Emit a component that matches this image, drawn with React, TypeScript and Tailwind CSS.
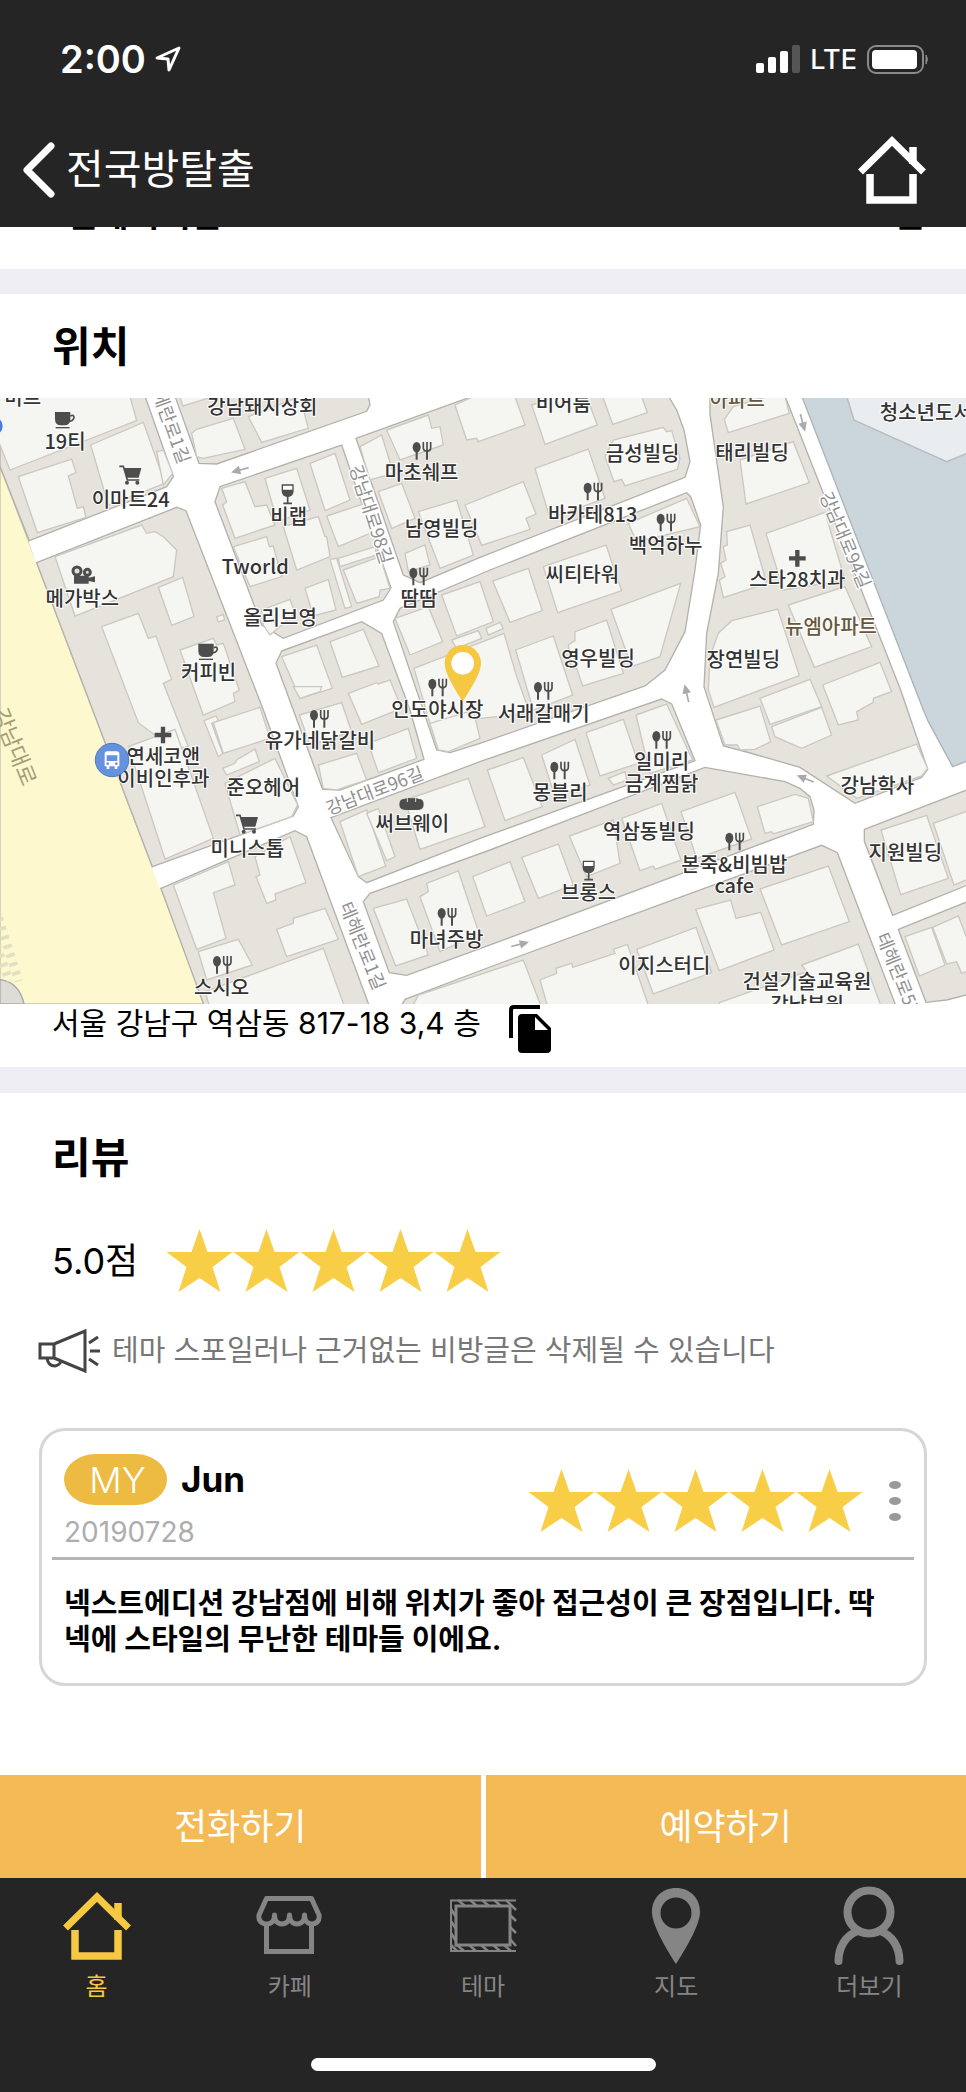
import React from "react";

const STAR = "M33 0 L41 23 H66 L46 38 L54 63 L33 49 L12 63 L20 38 L0 23 H25 Z";

function Stars({ count, className }: any) {
    return (
        <div className={className} role="img" aria-label={count + " / 5"}>
            {Array.from({ length: count }).map((_, i) => (
                <svg key={i} viewBox="0 0 66 64" className="h-16 w-[67px]" fill="#f7ce46">
                    <path d={STAR} />
                </svg>
            ))}
        </div>
    );
}

function HomeIcon({ className }: any) {
    return (
        <svg viewBox="0 0 68 68" className={className} fill="none" stroke="currentColor">
            <path d="M2.5 36 L34 5 L65.5 36" strokeWidth="7" />
            <path d="M12 38 V64 H55 V38" strokeWidth="7.5" />
            <path d="M55 11 V28" strokeWidth="7.5" />
        </svg>
    );
}

function CafeIcon() {
    return (
        <svg viewBox="0 0 68 68" className="size-[68px]" fill="none" stroke="currentColor" strokeWidth="5">
            <path d="M10.500 30 V59.500 H55.500 V30" />
            <path
                d="M10.500 6.500 H55.500 L63 23 C64 29 60 32 56 32 C52 32 48.500 29 48.500 23 C48.500 29 45 32 41 32 C37 32 33.500 29 33.500 23 C33.500 29 30 32 26 32 C22 32 18.500 29 18.500 23 C18.500 29 15 32 11 32 C6 32 2 29 3 23 Z"
                strokeLinejoin="round"
            />
        </svg>
    );
}

function ThemeIcon() {
    return (
        <svg viewBox="0 0 68 68" className="size-[68px]" fill="none" stroke="currentColor">
            <path d="M67 8.500 H2 V59 H67" strokeWidth="2" />
            <rect x="7" y="14" width="54" height="39" strokeWidth="3" />
            <path
                d="M9 8l7 6M21 8l7 6M33 8l7 6M45 8l7 6M57 8l10 10M8 53l7 6M20 53l7 6M32 53l7 6M44 53l7 6M55 53l7 6M2 17l5 8M2 29l5 8M2 41l5 8M2 53l6 6M61 23l6 6M61 35l6 6M61 47l6 7"
                strokeWidth="2.5"
            />
        </svg>
    );
}

function PinIcon() {
    return (
        <svg viewBox="0 0 68 78" className="h-[78px] w-[68px]" fill="currentColor">
            <path
                fillRule="evenodd"
                d="M34 1 C20 1 10 11 10 25 C10 36 20 55 34 77 C48 55 58 36 58 25 C58 11 48 1 34 1 Z M34 10.500 a15.500 15.500 0 1 1 0 31 a15.500 15.500 0 1 1 0 -31 Z"
            />
        </svg>
    );
}

function PersonIcon() {
    return (
        <svg viewBox="0 0 70 80" className="h-20 w-[70px]" fill="none" stroke="currentColor" strokeWidth="8">
            <circle cx="35" cy="26" r="21.500" />
            <path d="M4.500 75 C4.500 61 12 49 24 45 M65.500 75 C65.500 61 58 49 46 45" strokeLinecap="round" />
        </svg>
    );
}

// land blocks between the streets
const blocks = [
    "0,-6 435,-6 520,236 500,266 88,428 0,205",
    "110,494 530,328 558,338 790,936 895,1226 880,1254 457,1406",
    "483,1471 885,1298 920,1316 1110,1830 615,1830",
    "525,-6 597,196 650,198 1100,40 1110,20 1105,-6",
    "660,266 1025,141 1173,570 1150,606 850,721 785,681 645,311",
    "1068,121 1420,-6 2005,-6 2030,36 2052,96 2070,191 2055,238 1440,478 1260,554 1210,531",
    "845,759 1085,671 1145,706 1230,936 1272,1084 1020,1176 968,1174 828,796",
    "1200,631 1470,516 2060,284 2072,296 2102,381 2085,516 2055,701 1995,816 1935,864 1440,1036 1350,1064 1310,1056 1180,671",
    "993,1259 1440,1091 1985,903 2015,918 2085,1088 1440,1321 1100,1454 1075,1436",
    "1110,1486 1470,1356 2115,1108 2355,1151 2400,1171 2430,1196 2442,1236 2440,1279 1440,1652 1220,1732 1168,1724 1090,1511",
    "1200,1830 1215,1804 1470,1707 2465,1342 2512,1364 2690,1830",
    "2130,-6 2130,50 2170,326 2155,526 2120,706 2112,866 2170,1044 2240,1062 2400,1108 2565,1216 2765,1138 2783,1114 2702,876 2355,-6",
    "2593,1294 2910,1172 2910,1458 2678,1552 2593,1330",
    "2695,1594 2910,1508 2910,1788 2840,1806 2778,1813",
];

const northWest = [
    "-10,20 390,20 410,92 30,240 -10,140",
    "272,165 430,97 495,280 325,345",
    "470,185 490,180 518,250 490,285",
    "55,260 215,207 228,248 205,258 232,355 250,350 258,382 112,428",
    "575,130 590,118 700,85 735,178 610,205 590,200",
    "540,20 640,20 548,48",
    "745,80 900,20 925,115 785,157",
    "165,500 425,405 440,430 465,425 490,440 530,480 520,560 225,678",
    "475,592 548,562 582,680 515,706",
    "305,710 415,670 445,745 468,738 515,868 490,880 565,1070 520,1076 415,998",
    "650,680 670,674 674,690 655,696",
    "540,780 640,745 650,765 670,760 718,900 700,910 705,935 610,975",
    "668,345 680,335 665,295 735,275 765,350 800,345 825,405 705,445",
    "700,470 800,440 808,470 820,468 845,560 750,590",
    "795,265 890,235 930,360 832,395",
    "930,220 1005,190 1050,330 975,362",
    "980,378 1095,340 1110,430 1015,470",
    "850,410 955,380 975,440 980,440 990,500 890,540",
    "990,508 1010,505 1055,650 1035,655",
    "1015,505 1125,470 1130,495 1020,530",
    "1030,540 1140,500 1170,595 1140,600 1138,620 1070,640",
    "915,595 985,568 1008,660 940,678",
    "785,660 870,628 885,670 810,735 790,705",
    "1080,170 1145,135 1180,250 1110,270",
    "1160,120 1285,75 1295,115 1320,110 1330,165 1200,210",
    "1135,305 1205,280 1245,385 1175,415",
    "1255,365 1370,330 1420,495 1320,535",
    "1215,490 1275,465 1290,525 1225,545",
    "1185,685 1285,650 1328,755 1230,795",
    "845,800 950,765 997,895 900,925",
    "990,755 1090,718 1137,828 1027,862",
    "1242,835 1512,730 1550,860 1590,970 1290,1000",
];

const northEast = [
    "-75,45 -20,20 105,20 135,105 -5,155 -10,145 -40,150",
    "155,45 230,20 320,20 352,105 195,163",
    "368,20 485,20 502,68 398,103",
    "375,200 400,150 550,112 560,125 575,122 600,205 592,238 435,288 425,268 402,275",
    "165,235 325,177 375,325 210,385",
    "-45,345 130,275 168,372 138,385 150,418 5,466",
    "445,400 620,325 660,410 470,455",
    "190,530 378,465 425,602 233,668",
    "38,573 145,535 187,662 90,697",
    "-115,615 0,575 40,695 -70,738",
    "18,715 60,697 70,715 25,735",
    "-85,750 -5,722 5,745 -70,775",
    "393,658 602,580 540,800 455,830",
    "265,765 285,752 285,725 380,690 430,850 308,888 290,835 275,835",
    "107,780 220,738 278,915 160,960",
    "733,88 760,50 860,20 915,20 928,70 745,128",
    "780,210 940,155 988,278 798,342",
    "740,425 810,405 860,580 730,623 718,570 735,560 722,520 738,510 730,470 742,465",
    "858,430 1035,367 1095,570 910,600",
    "925,645 1095,590 1175,770 1003,832",
    "755,692 893,657 958,857 702,952 685,900 690,800 715,730",
    "1028,885 1200,817 1235,905 1180,925 1180,937 1130,965 1135,990 1075,1005",
    "840,925 990,868 1025,950 870,1003",
    "875,1010 1025,952 1055,1035 965,1075 885,1040",
    "708,990 840,948 872,1055 825,1078 780,1080 772,1065 735,1065",
];

const southWest = [
    "385,170 525,118 640,445 495,507",
    "612,92 648,78 655,92 635,100 668,190 655,200",
    "640,98 780,52 810,145 670,190",
    "668,235 705,220 710,210 765,177 778,215 680,255",
    "675,280 825,205 893,345 875,380 720,435",
    "520,585 685,515 705,585 640,608 678,745 590,778",
    "765,500 870,440 918,578 825,612 828,630 800,640 768,560 780,555",
    "830,718 880,700 880,685 975,655 1015,748 860,800",
    "595,785 715,748 757,825 620,870",
    "615,905 970,775 1035,954 630,954",
    "898,75 1025,38 1055,125 930,165",
    "955,225 1070,190 1100,270 1010,300 970,295",
    "1105,160 1225,115 1250,205 1135,248",
    "1045,10 1130,-22 1135,-18 1170,-30 1205,55 1085,103",
    "880,-10 965,-10 960,5 900,25",
    "1290,100 1420,60 1440,145 1345,185 1315,180",
    "1020,395 1100,360 1157,528 1075,560",
    "1100,370 1135,355 1185,500 1160,512",
    "1215,330 1405,265 1455,410 1260,478",
    "1120,655 1220,627 1285,795 1187,828",
    "1260,620 1285,605 1280,580 1375,543 1437,730 1320,785",
    "1235,954 1255,915 1570,810 1625,954",
];

const southEast = [
    "22,240 130,203 187,350 75,392",
    "185,195 285,148 330,285 225,320",
    "318,128 430,88 475,220 360,258",
    "468,75 560,42 638,210 510,250",
    "385,265 435,245 440,270 400,285",
    "268,438 400,390 420,520 320,560",
    "425,385 545,340 603,510 525,538 520,528 480,542",
    "603,365 765,307 815,447 650,505",
    "832,350 945,313 985,325 1000,395 880,432 875,425 855,430",
    "125,502 235,462 280,585 175,625",
    "-22,560 90,515 135,635 20,678",
    "180,870 230,850 228,835 275,820 278,832 405,790 400,778 442,763 508,954 204,954",
    "470,778 648,712 695,848 520,912",
    "647,658 752,630 768,685 842,667 882,780 718,842",
    "840,597 1045,528 1108,695 905,765",
    "965,825 1135,762 1205,954 720,954 718,938 980,845",
    "1040,258 1310,162 1343,235 1325,258 1130,325",
    "1203,420 1340,376 1405,565 1262,614",
    "1360,400 1470,360 1470,565 1422,585",
    "1275,740 1355,712 1395,825 1318,858",
    "1358,712 1435,678 1470,770 1470,840 1445,850 1430,815 1400,822",
];

// name, centre x, baseline y
const places: any[] = [
    ["미트", 68, 20], ["19티", 195, 153], ["이마트24", 392, 326], ["강남돼지상회", 787, 48], ["비랩", 866, 379],
    ["마초쉐프", 1265, 246], ["남영빌딩", 1325, 414], ["Tworld", 766, 528], ["메가박스", 247, 624],
    ["올리브영", 840, 682], ["땀땀", 1257, 624], ["커피빈", 626, 846], ["비어룸", 1690, 38],
    ["금성빌딩", 1928, 188], ["바카테813", 1778, 371], ["백억하누", 1997, 464], ["씨티타워", 1747, 552],
    ["영우빌딩", 1794, 804], ["태리빌딩", 2256, 186], ["스타28치과", 2392, 568], ["장연빌딩", 2230, 808],
    ["청소년도서관", 2805, 66], ["인도야시장", 1312, 958], ["유가네닭갈비", 960, 1051], ["연세코앤", 490, 1098],
    ["이비인후과", 490, 1164], ["준오헤어", 790, 1192], ["미니스톱", 742, 1374], ["써브웨이", 1237, 1298],
    ["스시오", 665, 1790], ["마녀주방", 1340, 1648], ["서래갈매기", 1631, 968], ["일미리", 1985, 1114],
    ["금계찜닭", 1985, 1180], ["몽블리", 1680, 1206], ["역삼동빌딩", 1947, 1324], ["브롱스", 1766, 1506],
    ["본죽&비빔밥", 2203, 1421], ["cafe", 2203, 1484], ["강남학사", 2632, 1186], ["지원빌딩", 2716, 1386],
    ["이지스터디", 1993, 1726], ["건설기술교육원", 2421, 1772], ["강남분원", 2421, 1842],
];

const apartments: any[] = [["아파트", 2212, 26], ["뉴엠아파트", 2493, 708]];

// name, centre x, centre y, angle
const streets: any[] = [
    ["테헤란로1길", 510, 62, 70], ["강남대로98길", 1118, 348, 72], ["강남대로96길", 1122, 1174, -21],
    ["강남대로94길", 2540, 424, 67], ["테헤란로1길", 1092, 1642, 68], ["테헤란로57길", 2708, 1748, 68],
];

const forks = [
    [1265, 159], [1255, 536], [1312, 869], [1778, 281], [1997, 374], [1629, 879], [957, 963],
    [1340, 1557], [666, 1701], [1984, 1026], [1678, 1118], [2203, 1331],
];

const arrows = [[720, 216, 165], [2408, 74, 75], [2060, 886, -103], [1560, 1639, -14], [2416, 1142, 202]];

function Buildings({ list, x, y }: any) {
    return (
        <g transform={"translate(" + x + " " + y + ")"} fill="#f5f5f2" stroke="#cbc8c0" strokeWidth="4">
            {list.map((points: string) => <polygon key={points} points={points} />)}
        </g>
    );
}

function StreetMap() {
    return (
        <svg viewBox="0 0 2898 1818" className="block w-full font-['Noto_Sans_CJK_KR',sans-serif]" role="img" aria-label="지도">
            <rect width="2898" height="1818" fill="#fff" />
            <path d="M0 205 L90 440 L110 494 L457 1406 L483 1471 L615 1818 H72 C62 1775 40 1750 0 1745 Z" fill="#fdf8cd" stroke="#c4c1ac" strokeWidth="4" />
            <path d="M90 430 L111 494 M459 1408 L482 1469" stroke="#fff" strokeWidth="8" />
            <path d="M0 1745 C40 1750 62 1775 72 1818 H0 Z" fill="#dedcd6" stroke="#aaa" strokeWidth="4" />
            <g stroke="#e3dfc3" strokeWidth="26" strokeDasharray="11 17">
                <path d="M-4 1560 L56 1750" />
                <path d="M-28 1590 L28 1750" />
            </g>
            <g fill="#e6e3dc" stroke="#b3b1ac" strokeWidth="4">
                {blocks.map((points) => <polygon key={points} points={points} />)}
            </g>
            <path d="M2405 -6 L2770 936 L2785 971 L2858 1106 L2910 1086 V-6 Z" fill="#cbd5dc" stroke="#aeb3b6" strokeWidth="4" />
            <path d="M2540 -6 L2562 66 L2840 191 L2910 162 V-6 Z" fill="#e9edf0" stroke="#b5bbbf" strokeWidth="4" />
            <Buildings list={northWest} x={0} y={-24} />
            <Buildings list={northEast} x={1440} y={-24} />
            <Buildings list={southWest} x={0} y={876} />
            <Buildings list={southEast} x={1440} y={876} />

            {arrows.map(([x, y, angle]) => (
                <g key={x} transform={"translate(" + x + " " + y + ") rotate(" + angle + ")"}>
                    <path d="M-27 0 H5" stroke="#aaa" strokeWidth="5" />
                    <path d="M0 -13 L28 0 L0 13 Z" fill="#aaa" />
                </g>
            ))}

            <g fontSize="54" fill="#8f8f8f" stroke="#fff" strokeWidth="8" paintOrder="stroke" textAnchor="middle" dominantBaseline="central">
                {streets.map(([name, x, y, angle]) => (
                    <text key={name + x} transform={"translate(" + x + " " + y + ") rotate(" + angle + ")"}>{name}</text>
                ))}
            </g>
            <text transform="translate(50 1044) rotate(68)" fontSize="66" fill="#a39c75" textAnchor="middle" dominantBaseline="central">강남대로</text>

            <g fill="#4d4d4d" stroke="#4d4d4d">
                {forks.map(([x, y]) => (
                    <g key={x + "-" + y} transform={"translate(" + x + " " + y + ")"}>
                        <ellipse cx="-15" cy="-11" rx="12" ry="16" stroke="none" />
                        <path d="M-15 0 V26 M16 0 V26" strokeWidth="6" />
                        <path d="M5 -27 V-10 Q5 0 16 0 Q27 0 27 -10 V-27 M16 -27 V0" strokeWidth="5" fill="none" />
                    </g>
                ))}
                {[[195, 68], [625, 763]].map(([x, y]) => (
                    <g key={x} transform={"translate(" + x + " " + y + ")"}>
                        <path d="M-30 -26 H16 V-4 Q16 14 -2 14 H-12 Q-30 14 -30 -4 Z" stroke="none" />
                        <path d="M16 -14 Q27 -19 27 -9 Q24 1 12 2" strokeWidth="5" fill="none" />
                        <path d="M-28 21 H14" strokeWidth="4" />
                    </g>
                ))}
                {[[392, 231], [742, 1278]].map(([x, y]) => (
                    <g key={x} transform={"translate(" + x + " " + y + ")"}>
                        <path d="M-20 -21 H32 L24 8 H-12 Z" stroke="none" />
                        <path d="M-34 -26 H-22 L-10 15 H26" strokeWidth="5" fill="none" />
                        <circle cx="-11" cy="23" r="6" stroke="none" />
                        <circle cx="20" cy="23" r="6" stroke="none" />
                    </g>
                ))}
                {[[863, 288], [1766, 1417]].map(([x, y]) => (
                    <g key={x} transform={"translate(" + x + " " + y + ")"}>
                        <path d="M-16 -27 H16 V-10 Q16 6 0 7 Q-16 6 -16 -10 Z" fill="#fff" strokeWidth="4" />
                        <path d="M-16 -13 H16 Q16 7 0 7 Q-16 7 -16 -13" stroke="none" />
                        <path d="M0 6 V27 M-13 28 H13" strokeWidth="5" />
                    </g>
                ))}
                {[[2392, 481], [489, 1011]].map(([x, y]) => (
                    <path key={x} transform={"translate(" + x + " " + y + ")"} d="M-25 0 H25 M0 -25 V25" strokeWidth="13" />
                ))}
                <g transform="translate(250 531)">
                    <circle cx="-19" cy="-12" r="12" strokeWidth="9" fill="#ddd" />
                    <circle cx="12" cy="-8" r="9" strokeWidth="9" fill="#ddd" />
                    <path d="M-28 2 H16 V8 L35 4 V22 L16 18 V26 H-28 Z" stroke="none" />
                </g>
                <path d="M1216 1236 Q1198 1236 1198 1219 Q1198 1203 1213 1203 Q1222 1198 1235 1201 Q1248 1198 1257 1203 Q1271 1203 1271 1219 Q1271 1236 1254 1236 Z" stroke="none" />
                <path d="M1222 1200 V1212 M1247 1200 V1212" stroke="#e6e3dc" strokeWidth="3" />
            </g>

            <g fontSize="60" fontWeight="500" fill="#333" stroke="#fff" strokeWidth="6" paintOrder="stroke" textAnchor="middle">
                {places.map(([name, x, y]) => <text key={name} x={x} y={y}>{name}</text>)}
                {apartments.map(([name, x, y]) => <text key={name} x={x} y={y} fill="#66573c">{name}</text>)}
            </g>

            <circle cx="-20" cy="84" r="28" fill="#4a7be0" />
            <circle cx="336" cy="1086" r="50" fill="#6592de" stroke="#4d79c6" strokeWidth="3" />
            <path fillRule="evenodd" fill="#fff" d="M322 1060 H350 Q358 1060 358 1068 V1105 H352 V1113 H344 V1105 H328 V1113 H320 V1105 H314 V1068 Q314 1060 322 1060 Z M320 1072 V1089 H352 V1072 Z M319 1097 a4 4 0 1 0 8 0 a4 4 0 1 0 -8 0 M345 1097 a4 4 0 1 0 8 0 a4 4 0 1 0 -8 0" />
            <path d="M1388 741 C1357 741 1334 765 1334 796 C1334 825 1362 870 1388 911 C1414 870 1443 825 1443 796 C1443 765 1419 741 1388 741 Z" fill="#f5c842" />
            <circle cx="1388" cy="796" r="34" fill="#fff" />
        </svg>
    );
}

const tabs = [
    { name: "홈", icon: <HomeIcon className="size-[68px]" /> },
    { name: "카페", icon: <CafeIcon /> },
    { name: "테마", icon: <ThemeIcon /> },
    { name: "지도", icon: <PinIcon /> },
    { name: "더보기", icon: <PersonIcon /> },
];

export default function App() {
    return (
        <div className="flex min-h-screen flex-col bg-white font-[Inter,'Noto_Sans_CJK_KR',sans-serif] text-black">
            <header className="bg-[#252525] text-white">
                <div className="flex h-[118px] items-center justify-between pr-9 pl-[60px]">
                    <div className="flex items-center gap-2">
                        <span className="text-[38px] leading-none font-semibold">2:00</span>
                        <svg viewBox="0 0 28 28" className="size-7" fill="none" stroke="#fff" strokeWidth="3" strokeLinejoin="round">
                            <path d="M25 3 L3 13 L14 14 L15 25 Z" />
                        </svg>
                    </div>
                    <div className="flex items-center gap-[10px]">
                        <svg viewBox="0 0 44 28" className="h-7 w-11" fill="#fff">
                            <rect x="0" y="18" width="8" height="10" rx="2" />
                            <rect x="12" y="12" width="8" height="16" rx="2" />
                            <rect x="24" y="6" width="8" height="22" rx="2" />
                            <rect x="36" y="0" width="8" height="28" rx="2" fill="#555" />
                        </svg>
                        <span className="text-[27px] leading-none font-medium">LTE</span>
                        <svg viewBox="0 0 63 29" className="h-[29px] w-[63px]">
                            <rect x="1" y="1" width="55" height="27" rx="8" fill="none" stroke="#8a8a8a" strokeWidth="2" />
                            <rect x="5" y="5" width="45" height="19" rx="4" fill="#fff" />
                            <path d="M59 10 Q62 14 59 19 Z" fill="#8a8a8a" stroke="#8a8a8a" />
                        </svg>
                    </div>
                </div>
                <div className="flex h-[109px] items-center justify-between pr-10 pb-[6px] pl-5">
                    <button className="flex items-center gap-2">
                        <svg viewBox="0 0 38 58" className="h-[58px] w-[38px]" fill="none" stroke="#fff" strokeWidth="7" strokeLinecap="round" strokeLinejoin="round">
                            <path d="M31 5 L7 29 L31 53" />
                        </svg>
                        <span className="text-[41px] leading-none">전국방탈출</span>
                    </button>
                    <button aria-label="홈으로">
                        <HomeIcon className="size-[68px]" />
                    </button>
                </div>
            </header>

            {/* last row of the section scrolled under the header */}
            <section className="h-[42px] pr-10 pl-[66px]">
                <div className="flex h-[3px] items-end justify-between overflow-hidden text-[34px] leading-[30px] font-bold">
                    <span>전체이시간</span>
                    <span>0분</span>
                </div>
            </section>

            <section className="border-t-[25px] border-[#efeef4]">
                <h2 className="px-[52px] pt-[30px] pb-[29px] text-[42px] leading-[45px] font-bold">위치</h2>
                <StreetMap />
                <div className="flex h-[63px] items-start px-[52px]">
                    <p className="text-[30px] leading-[38px]">서울 강남구 역삼동 817-18 3,4 층</p>
                    <button className="ml-7" aria-label="주소 복사">
                        <svg viewBox="0 0 44 50" className="h-[50px] w-11">
                            <path d="M2 34 V6 Q2 3 5 3 H31" fill="none" stroke="#000" strokeWidth="4" />
                            <path fillRule="evenodd" d="M13 10 H28 L42 24 V45 Q42 49 38 49 H13 Q9 49 9 45 V14 Q9 10 13 10 Z M26 13 V26 H39 Z" />
                        </svg>
                    </button>
                </div>
            </section>

            <section className="border-t-[26px] border-[#efeef4]">
                <h2 className="px-[52px] pt-[42px] pb-[49px] text-[42px] leading-[45px] font-bold">리뷰</h2>
                <div className="flex items-center gap-7 px-[52px]">
                    <span className="text-[36px] leading-none">5.0점</span>
                    <Stars count={5} className="flex" />
                </div>
                <div className="mt-9 flex items-center gap-3 pl-[38px] text-[#777]">
                    <svg viewBox="0 0 62 44" className="h-11 w-[62px] shrink-0" fill="none" stroke="#444" strokeWidth="3">
                        <path d="M2 15 H16 V29 H2 Z M16 15 L47 2 V42 L16 29 M9 29 Q10 37 17 37 Q22 36 23 32 M51 14 L60 8 M52 22 H62 M51 30 L60 36" />
                    </svg>
                    <p className="text-[29px] leading-[44px]">테마 스포일러나 근거없는 비방글은 삭제될 수 있습니다</p>
                </div>

                <article className="mx-[39px] mt-[55px] mb-[83px] rounded-[26px] border-[3px] border-[#d6d6d6] px-[10px] pt-[23px] pb-[25px]">
                    <div className="flex justify-between px-3">
                        <div>
                            <div className="flex items-center gap-[14px]">
                                <span className="flex h-[51px] w-[103px] items-center justify-center rounded-[32px/26px] bg-[#edbb41] pl-1 text-[36px] font-light text-white">MY</span>
                                <strong className="text-[35px] leading-none">Jun</strong>
                            </div>
                            <time className="mt-3 block text-[28px] leading-[30px] text-[#adadad]">20190728</time>
                        </div>
                        <div className="flex items-center gap-[26px]">
                            <Stars count={5} className="flex" />
                            <button aria-label="더보기 메뉴">
                                <svg viewBox="0 0 13 40" className="h-10 w-[13px]" fill="#9a9a9a">
                                    <ellipse cx="6" cy="4" rx="6" ry="4" />
                                    <ellipse cx="6" cy="20" rx="6" ry="4" />
                                    <ellipse cx="6" cy="36" rx="6" ry="4" />
                                </svg>
                            </button>
                        </div>
                    </div>
                    <hr className="mt-[10px] border-t-[3px] border-[#b5b5b5]" />
                    <p className="mt-[26px] px-3 text-[29px] leading-9 font-bold">
                        넥스트에디션 강남점에 비해 위치가 좋아 접근성이 큰 장점입니다. 딱 넥에 스타일의 무난한 테마들 이에요.
                    </p>
                </article>
            </section>

            <div className="mt-auto grid grid-cols-2 gap-[5px]">
                <button className="h-[103px] bg-[#f4ba55] text-[36px] text-white">전화하기</button>
                <button className="h-[103px] bg-[#f4ba55] text-[36px] text-white">예약하기</button>
            </div>

            <nav className="bg-[#252525] pb-[21px]">
                <div className="grid grid-cols-5">
                    {tabs.map((tab, i) => (
                        <a key={tab.name} href="#" className={"flex flex-col items-center pt-2 " + (i === 0 ? "text-[#f7c842]" : "text-[#858585]")}>
                            <span className="flex h-20 items-center">{tab.icon}</span>
                            <span className="mt-1 text-2xl leading-[34px]">{tab.name}</span>
                        </a>
                    ))}
                </div>
                <div className="mx-auto mt-[54px] h-[13px] w-[345px] rounded-full bg-white"></div>
            </nav>
        </div>
    );
}
